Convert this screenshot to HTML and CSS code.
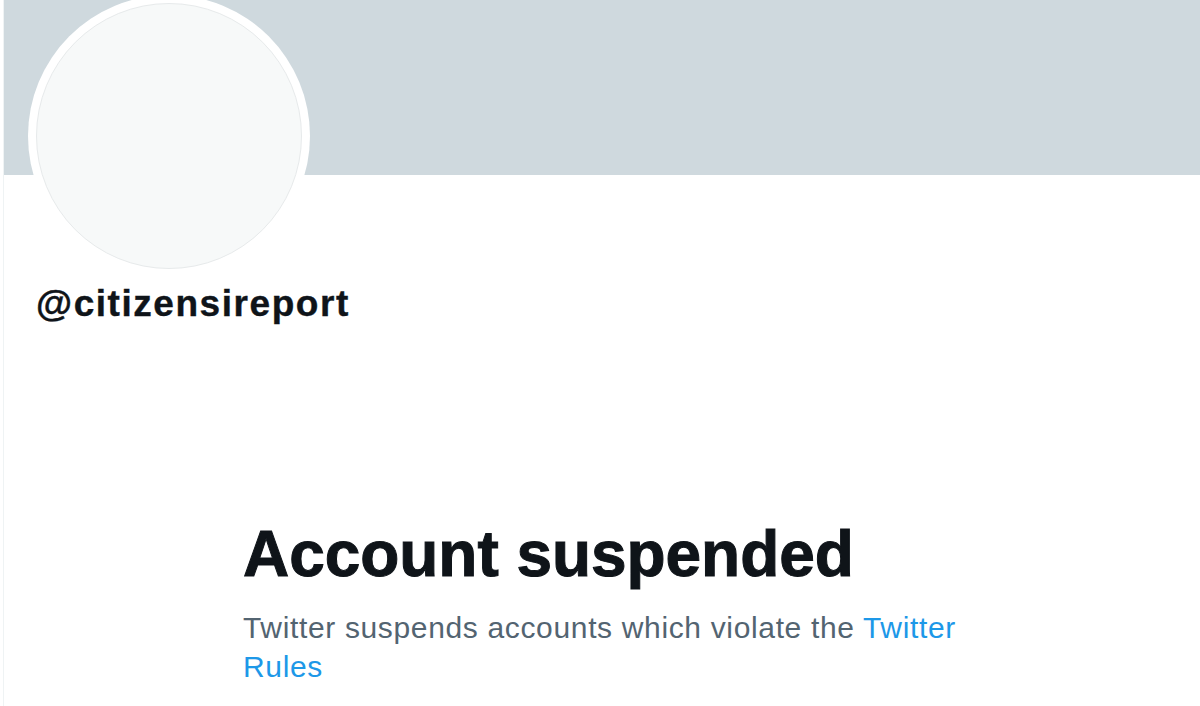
FILE: index.html
```html
<!DOCTYPE html>
<html lang="en">
<head>
<meta charset="utf-8">
<title>@citizensireport</title>
<link rel="stylesheet" href="styles.css">
</head>
<body>
<main class="column">
  <div class="banner"></div>
  <div class="avatar"><div class="avatar-inner"></div></div>
  <div class="handle">@citizensireport</div>
  <section class="notice">
    <h1 class="notice-title">Account suspended</h1>
    <p class="notice-text">Twitter suspends accounts which violate the <a class="notice-link" href="#">Twitter Rules</a></p>
  </section>
</main>
</body>
</html>
```

FILE: styles.css
```css
html, body {
  margin: 0;
  padding: 0;
  background: #ffffff;
  height: 706px;
  overflow: hidden;
}

body {
  font-family: "Liberation Sans", Arial, sans-serif;
  color: #0f1419;
}

.column {
  margin-left: 3px;
  border-left: 1px solid #eff3f4;
  min-height: 706px;
  display: flex;
  flex-direction: column;
}

.banner {
  height: 175px;
  background: #cfd9de;
}

.avatar {
  width: 282px;
  height: 282px;
  box-sizing: border-box;
  margin-top: -180px;
  margin-left: 24px;
  padding: 8px;
  border-radius: 50%;
  background: #ffffff;
}

.avatar-inner {
  width: 100%;
  height: 100%;
  box-sizing: border-box;
  border-radius: 50%;
  border: 1px solid #e7eaeb;
  background: #f7f9f9;
}

.handle {
  margin-top: 5px;
  padding-left: 32px;
  font-size: 37px;
  line-height: 44px;
  font-weight: 700;
  letter-spacing: 1.55px;
  -webkit-text-stroke: 0.4px #0f1419;
  color: #0f1419;
}

.notice {
  margin-top: 190px;
  padding-left: 239px;
  width: 730px;
}

.notice-title {
  margin: 0;
  font-size: 64px;
  line-height: 1.2;
  font-weight: 700;
  letter-spacing: -0.05px;
  -webkit-text-stroke: 1px #0f1419;
  color: #0f1419;
}

.notice-text {
  margin: 15px 0 0;
  font-size: 30px;
  line-height: 39px;
  letter-spacing: 0.65px;
  color: #536471;
}

.notice-link {
  color: #1d98e8;
  text-decoration: none;
}
```
